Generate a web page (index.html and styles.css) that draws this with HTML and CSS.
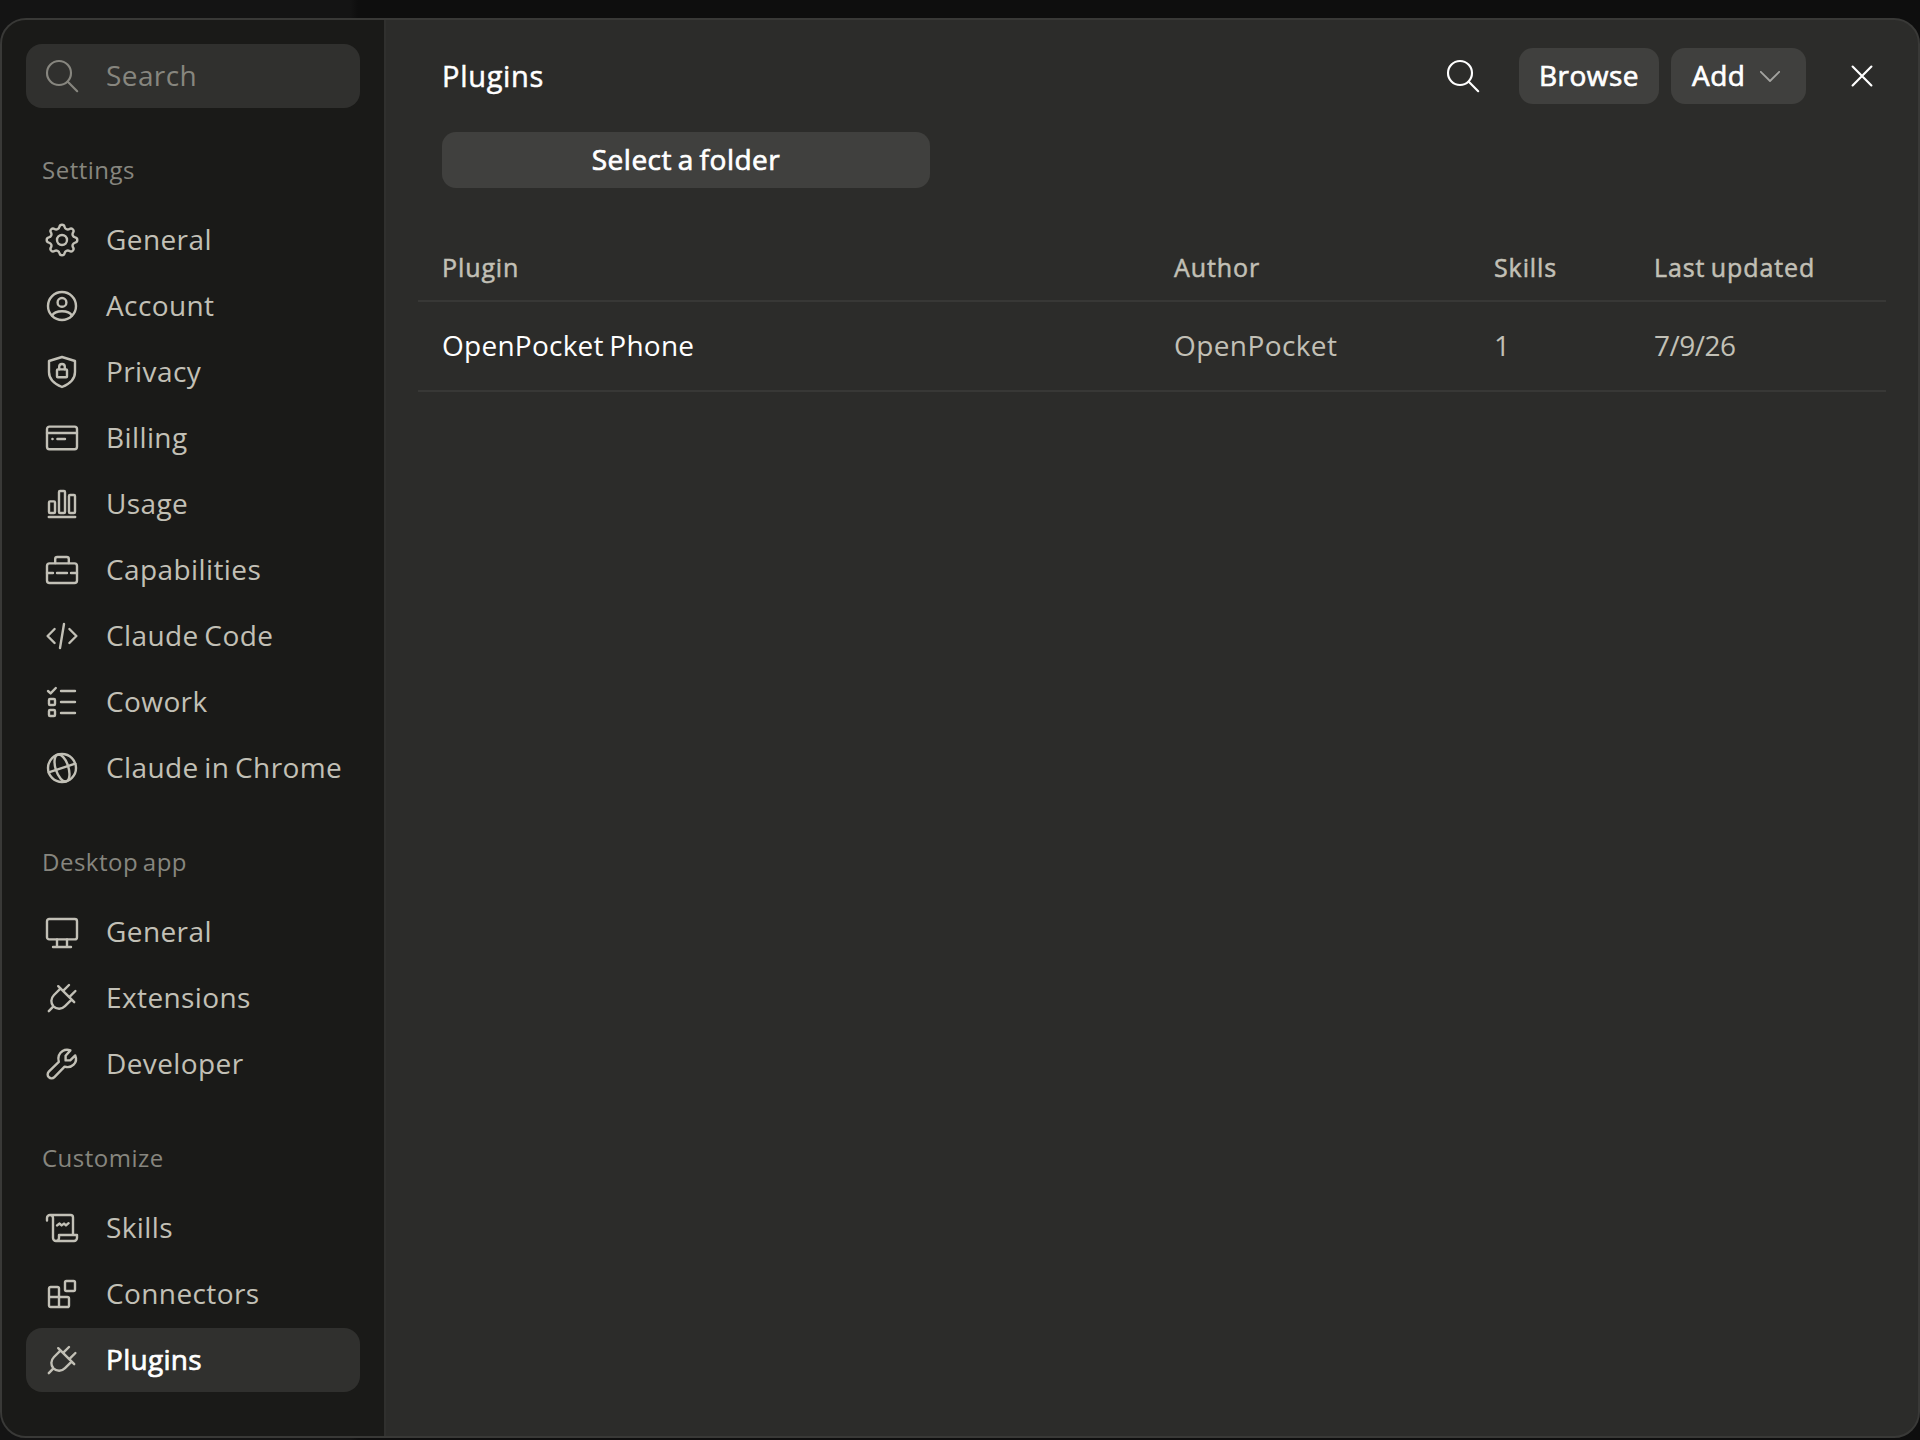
FILE: index.html
```html
<!DOCTYPE html>
<html lang="en">
<head>
    <meta charset="utf-8">
    <meta name="viewport" content="width=device-width, initial-scale=1">
    <title>Plugins</title>
    <link rel="stylesheet" href="styles.css">
</head>
<body>

    <!-- Shared icon shapes -->
    <svg class="sprite" width="0" height="0">
        <symbol id="icon-search" viewBox="0 0 20 20"><circle cx="8.5" cy="8.5" r="6"/><path d="M12.9 12.9l4.7 4.7"/></symbol>
        <symbol id="icon-plug" viewBox="0 0 20 20"><path d="M8.1 4.1l8 8M9.2 5.3L6 8.5c-1.7 1.7-1.7 4.1-.3 5.7 1.7 1.6 4.1 1.6 5.8-.1l3.3-3.3M3.4 16.6l2.3-2.4M10.8 6.2l2.7-2.7M14 9.2l2.7-2.7"/></symbol>
    </svg>

    <div class="dialog">
        <aside class="sidebar">
            <label class="search-box">
                <svg class="icon"><use href="#icon-search"/></svg>
                <span>Search</span>
            </label>

            <h3 class="group-title">Settings</h3>
            <nav class="group">
                <a class="item">
                    <svg class="icon" viewBox="0 0 20 20"><circle cx="10" cy="10" r="2.5"/><path d="M16.58 8.72A1.3 1.3 0 0 1 16.58 11.28A1.6 1.6 0 0 0 15.55 13.75A1.3 1.3 0 0 1 13.75 15.55A1.6 1.6 0 0 0 11.28 16.58A1.3 1.3 0 0 1 8.72 16.58A1.6 1.6 0 0 0 6.25 15.55A1.3 1.3 0 0 1 4.45 13.75A1.6 1.6 0 0 0 3.42 11.28A1.3 1.3 0 0 1 3.42 8.72A1.6 1.6 0 0 0 4.45 6.25A1.3 1.3 0 0 1 6.25 4.45A1.6 1.6 0 0 0 8.72 3.42A1.3 1.3 0 0 1 11.28 3.42A1.6 1.6 0 0 0 13.75 4.45A1.3 1.3 0 0 1 15.55 6.25A1.6 1.6 0 0 0 16.58 8.72z"/></svg>
                    <span>General</span>
                </a>
                <a class="item">
                    <svg class="icon" viewBox="0 0 20 20"><circle cx="10" cy="10" r="7"/><circle cx="10" cy="8.2" r="2.2"/><path d="M5.1 14.8c.7-1.4 2.5-2.2 4.9-2.2s4.2.8 4.9 2.2"/></svg>
                    <span>Account</span>
                </a>
                <a class="item">
                    <svg class="icon" viewBox="0 0 20 20"><path d="M10 2.5l6.5 2V10c0 3.7-2.6 6-6.5 7.5C6.1 16 3.5 13.7 3.5 10V4.5z"/><rect x="7.5" y="8.7" width="5" height="3.9" rx=".4"/><path d="M8.6 8.6V7.4a1.4 1.4 0 0 1 2.8 0v1.2"/></svg>
                    <span>Privacy</span>
                </a>
                <a class="item">
                    <svg class="icon" viewBox="0 0 20 20"><rect x="2.5" y="4.3" width="15" height="11.3" rx="1.2"/><path d="M2.5 7.5h15M7.7 10.5h3.8M5.2 10.5h.1"/></svg>
                    <span>Billing</span>
                </a>
                <a class="item">
                    <svg class="icon" viewBox="0 0 20 20"><rect x="3.5" y="8.7" width="3" height="5.8" rx=".5"/><rect x="8.5" y="3.5" width="3" height="11" rx=".5"/><rect x="13.5" y="5.5" width="3" height="9" rx=".5"/><path d="M3.4 16.5h13.2"/></svg>
                    <span>Usage</span>
                </a>
                <a class="item">
                    <svg class="icon" viewBox="0 0 20 20"><rect x="2.5" y="6.7" width="15" height="9.8" rx="1.3"/><path d="M6.6 6.5v-2a1 1 0 0 1 1-1h4.8a1 1 0 0 1 1 1v2M2.5 11.5h3M7.5 11.5h5M14.5 11.5h3"/></svg>
                    <span>Capabilities</span>
                </a>
                <a class="item">
                    <svg class="icon" viewBox="0 0 20 20"><path d="M6.3 6.5L2.8 10l3.5 3.5M13.7 6.5l3.5 3.5-3.5 3.5M11 4L9 16"/></svg>
                    <span>Claude Code</span>
                </a>
                <a class="item">
                    <svg class="icon" viewBox="0 0 20 20"><path d="M3 4.5l1.3 1.2L6.9 3M9.5 4.5h7M9.5 10h7M9.5 15.5h7"/><rect x="3.5" y="8.5" width="3" height="3" rx=".5"/><rect x="3.5" y="14" width="3" height="3" rx=".5"/></svg>
                    <span>Cowork</span>
                </a>
                <a class="item">
                    <svg class="icon" viewBox="0 0 20 20"><circle cx="10" cy="10" r="7"/><g transform="rotate(-18 10 10)"><ellipse cx="10" cy="10" rx="3.2" ry="7"/><path d="M3 10h14"/></g></svg>
                    <span>Claude in Chrome</span>
                </a>
            </nav>

            <h3 class="group-title">Desktop app</h3>
            <nav class="group">
                <a class="item">
                    <svg class="icon" viewBox="0 0 20 20"><rect x="2.5" y="3.5" width="15" height="10.2" rx="1.1"/><path d="M7.5 13.7v3.8M12.5 13.7v3.8M5.5 17.5h9"/></svg>
                    <span>General</span>
                </a>
                <a class="item">
                    <svg class="icon"><use href="#icon-plug"/></svg>
                    <span>Extensions</span>
                </a>
                <a class="item">
                    <svg class="icon" viewBox="0 0 20 20"><path d="M8.4 8.9C7.8 6.6 8.6 4.6 10.3 3.5c1.2-.7 2.6-.8 3.9-.3l-2.4 2.7v2.3h2.3l2.5-2.5c.7 1.6.4 3.4-.8 4.6-1.2 1.2-2.9 1.5-4.5 1L6.2 16.6a1.95 1.95 0 0 1-2.8-2.8z"/></svg>
                    <span>Developer</span>
                </a>
            </nav>

            <h3 class="group-title">Customize</h3>
            <nav class="group">
                <a class="item">
                    <svg class="icon" viewBox="0 0 20 20"><path d="M2.5 6.3V5a1.5 1.5 0 0 1 3 0v10A1.5 1.5 0 0 0 7 16.5h9a1.5 1.5 0 0 0 1.5-1.5v-1.5h-9V15A1.5 1.5 0 0 1 7 16.5M4 3.5h10.3a1.2 1.2 0 0 1 1.2 1.2v8.8M7.5 8.7l1.3-.9 1 .9 1.2-.9 1 .9 1.3-1.1"/></svg>
                    <span>Skills</span>
                </a>
                <a class="item">
                    <svg class="icon" viewBox="0 0 20 20"><rect x="11.5" y="3.5" width="5" height="5" rx=".7"/><path d="M8.5 11.5V7.3a.8.8 0 0 0-.8-.8H4.3a.8.8 0 0 0-.8.8v8.4a.8.8 0 0 0 .8.8h8.4a.8.8 0 0 0 .8-.8v-3.4a.8.8 0 0 0-.8-.8H3.5M8.5 11.5v5"/></svg>
                    <span>Connectors</span>
                </a>
                <a class="item active">
                    <svg class="icon"><use href="#icon-plug"/></svg>
                    <span>Plugins</span>
                </a>
            </nav>
        </aside>

        <main class="content">
            <header class="header">
                <h1>Plugins</h1>
                <button class="icon-btn search-btn"><svg class="icon"><use href="#icon-search"/></svg></button>
                <button class="btn browse-btn">Browse</button>
                <button class="btn add-btn">
                    <span>Add</span>
                    <svg class="chevron" viewBox="0 0 20 11"><path d="M.8.8L10 10 19.2.8"/></svg>
                </button>
                <button class="icon-btn close-btn"><svg class="icon" viewBox="0 0 20 20"><path d="M5.3 5.3l9.4 9.4M14.7 5.3l-9.4 9.4"/></svg></button>
            </header>

            <button class="btn folder-btn">Select a folder</button>

            <table class="plugins">
                <tr>
                    <th>Plugin</th>
                    <th class="col-author">Author</th>
                    <th class="col-skills">Skills</th>
                    <th class="col-updated">Last updated</th>
                </tr>
                <tr>
                    <td class="name">OpenPocket Phone</td>
                    <td>OpenPocket</td>
                    <td>1</td>
                    <td class="date">7/9/26</td>
                </tr>
            </table>
        </main>
    </div>

</body>
</html>
```
FILE: styles.css
```css
* { box-sizing: border-box; }

body {
    margin: 0;
    height: 1440px;
    padding: 18px 0 2px;
    overflow: hidden;
    background: linear-gradient(90deg, #141414 350px, #0e0e0e 358px);
    font-family: "Open Sans", "Noto Sans", sans-serif;
    font-size: 28px;
    letter-spacing: 0.4px;
    word-spacing: -2px;
    color: #c2c0b6;
}

.sprite { position: absolute; }

.dialog {
    display: flex;
    height: 1420px;
    border: 2px solid #393937;
    border-radius: 26px;
    overflow: hidden;
    background: #2c2c2a;
}

/* Sidebar */
.sidebar {
    width: 384px;
    padding: 24px;
    background: #1a1a18;
    border-right: 2px solid #30302e;
}

.search-box, .item {
    display: flex;
    align-items: center;
    gap: 24px;
    height: 64px;
    padding: 0 16px;
    border-radius: 16px;
    white-space: nowrap;
}

.search-box span, .item span { margin-top: -2px; }

.search-box {
    background: #30302e;
    color: #87867f;
}

.group-title {
    margin: 0;
    height: 100px;
    padding: 24px 16px 0;
    line-height: 76px;
    font-size: 24px;
    font-weight: 400;
    letter-spacing: 0.5px;
    color: #87867f;
}

.group {
    display: flex;
    flex-direction: column;
    gap: 2px;
}

.item.active { background: #30302e; }

.item.active span {
    color: #fff;
    letter-spacing: 0.3px;
    -webkit-text-stroke: 0.7px;
}

.icon {
    flex: none;
    width: 40px;
    height: 40px;
}

.icon, .chevron {
    fill: none;
    stroke: currentColor;
    stroke-width: 1.08;
    stroke-linecap: round;
    stroke-linejoin: round;
}

.item .icon { stroke-width: 1.2; }

/* Content */
.content {
    flex: 1;
    padding: 28px 32px;
}

.header {
    display: flex;
    align-items: center;
    height: 56px;
    margin-right: -4px;
    padding-left: 24px;
    color: #fff;
}

h1 {
    flex: 1;
    margin: -2px 0 0;
    font-size: 29px;
    font-weight: 400;
    letter-spacing: 0.7px;
    -webkit-text-stroke: 0.5px;
}

button {
    padding: 0;
    border: none;
    background: none;
    font: inherit;
    word-spacing: inherit;
    color: #fff;
}

.icon-btn {
    display: flex;
    align-items: center;
    justify-content: center;
    width: 56px;
    height: 56px;
}

.btn {
    display: flex;
    align-items: center;
    justify-content: center;
    height: 56px;
    padding-bottom: 2px;
    border-radius: 14px;
    background: #40403e;
    letter-spacing: 0.5px;
    -webkit-text-stroke: 0.7px;
}

.search-btn { margin-right: 28px; }
.browse-btn { width: 140px; margin-right: 12px; }
.close-btn { margin-left: 28px; }

.add-btn {
    width: 135px;
    justify-content: space-between;
    padding: 0 26px 2px 21px;
}

.chevron {
    width: 20px;
    height: 11px;
    margin-top: 2px;
    stroke-width: 1.8;
    color: #a3a3a0;
}

.folder-btn {
    width: 488px;
    margin: 28px 0 0 24px;
}

/* Table */
.plugins {
    width: 100%;
    margin-top: 44px;
    border-spacing: 0;
    table-layout: fixed;
}

th, td {
    padding: 0 24px 2px;
    border-bottom: 2px solid #383836;
    text-align: left;
    white-space: nowrap;
}

th {
    height: 70px;
    padding-top: 2px;
    padding-bottom: 0;
    font-size: 25px;
    font-weight: 400;
    letter-spacing: 0.9px;
    -webkit-text-stroke: 0.5px;
}

td { height: 90px; }

.name {
    color: #fff;
    letter-spacing: 0.25px;
}

.date { letter-spacing: -0.5px; }

.col-author { width: 320px; }
.col-skills { width: 160px; }
.col-updated { width: 256px; }
```
